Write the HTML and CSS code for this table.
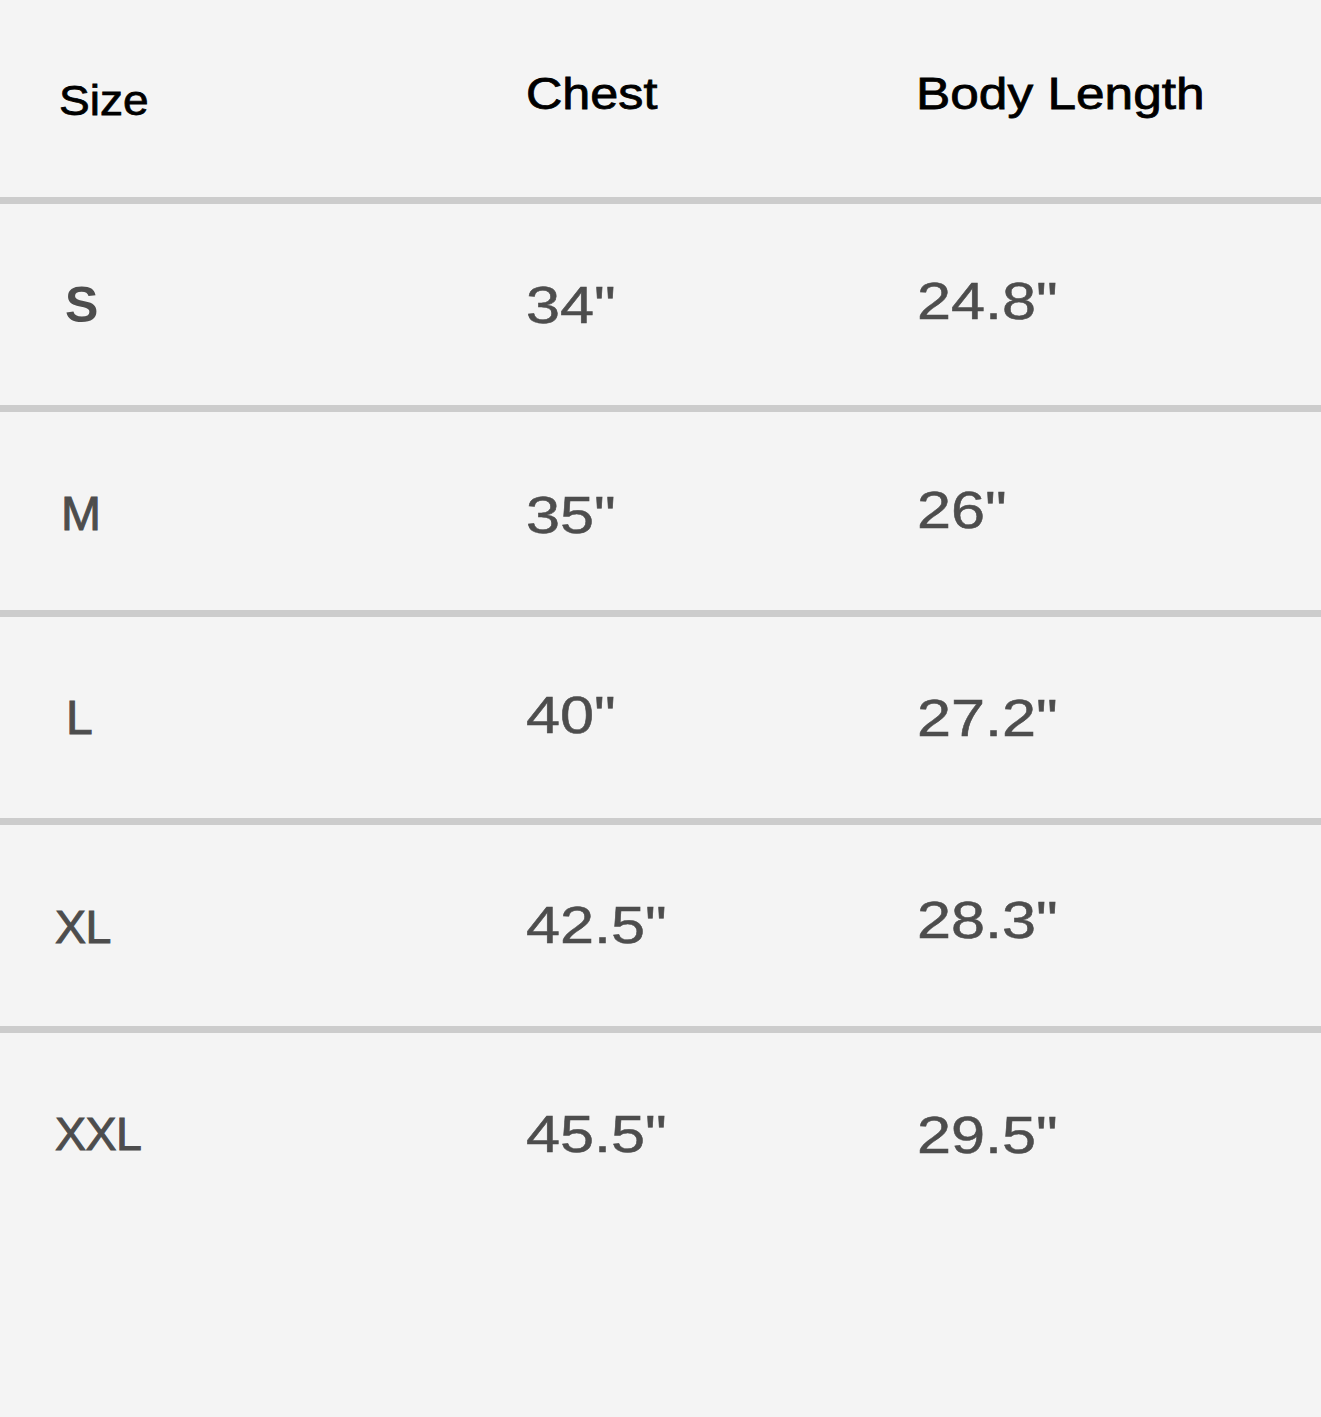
FILE: index.html
```html
<!DOCTYPE html>
<html lang="en">
<head>
<meta charset="utf-8">
<title>Size Chart</title>
<link rel="stylesheet" href="styles.css">
</head>
<body>
<div class="chart">
  <div class="row head">
    <div class="cell c1"><span class="t size">Size</span></div>
    <div class="cell c2"><span class="t hd">Chest</span></div>
    <div class="cell c3"><span class="t hd body-len">Body Length</span></div>
  </div>

  <div class="row data">
    <div class="cell c1"><span class="t lab bold shift-10 lift-1">S</span></div>
    <div class="cell c2"><span class="t val">34"</span></div>
    <div class="cell c3"><span class="t val lift-4">24.8"</span></div>
  </div>

  <div class="row data short">
    <div class="cell c1"><span class="t lab shift-6 drop-1">M</span></div>
    <div class="cell c2"><span class="t val drop-2">35"</span></div>
    <div class="cell c3"><span class="t val lift-3">26"</span></div>
  </div>

  <div class="row data">
    <div class="cell c1"><span class="t lab shift-11">L</span></div>
    <div class="cell c2"><span class="t val lift-3">40"</span></div>
    <div class="cell c3"><span class="t val">27.2"</span></div>
  </div>

  <div class="row data">
    <div class="cell c1"><span class="t lab tight drop-1">XL</span></div>
    <div class="cell c2"><span class="t val lift-1">42.5"</span></div>
    <div class="cell c3"><span class="t val lift-6">28.3"</span></div>
  </div>

  <div class="row data last">
    <div class="cell c1"><span class="t lab tight">XXL</span></div>
    <div class="cell c2"><span class="t val">45.5"</span></div>
    <div class="cell c3"><span class="t val drop-1">29.5"</span></div>
  </div>
</div>
</body>
</html>
```

FILE: styles.css
```css
html, body {
  margin: 0;
  padding: 0;
  background: #f4f4f4;
}

body {
  font-family: "Liberation Sans", Arial, Helvetica, sans-serif;
}

.chart {
  width: 1321px;
  min-height: 1417px;
  display: flex;
  flex-direction: column;
  background: #f4f4f4;
}

.row {
  display: grid;
  grid-template-columns: 526px 391px 1fr;
}

.head {
  height: 197px;
}

.data {
  border-top: 7px solid #cccccc;
  height: 201px;
}

.data.short {
  height: 198px;
}

.data.last {
  flex: 1;
  height: auto;
}

.cell {
  line-height: 1;
}

.c1 {
  padding-left: 55px;
}

.head .cell {
  padding-top: 72px;
}

.head .c1 {
  padding-top: 79px;
  padding-left: 59px;
}

.data .cell {
  padding-top: 76px;
}

.data .c1 {
  padding-top: 77px;
}

.t {
  display: block;
  width: max-content;
  line-height: 1;
  transform-origin: 0 0;
  white-space: nowrap;
}

.size {
  font-size: 43px;
  color: #000;
  transform: scaleX(1.07);
  -webkit-text-stroke: 0.8px #000;
}

.hd {
  font-size: 44.5px;
  color: #000;
  transform: scaleX(1.13);
  -webkit-text-stroke: 0.8px #000;
}

.body-len {
  transform: scaleX(1.155);
  margin-left: -1px;
}

.lab {
  font-size: 48px;
  color: #4d4d4d;
  -webkit-text-stroke: 1px #4d4d4d;
}

.lab.tight {
  font-size: 46.5px;
  letter-spacing: -0.5px;
  margin-top: 1px;
}

.lab.tight.drop-1 {
  margin-top: 2px;
}

.lab.bold {
  font-size: 50px;
  font-weight: 700;
  -webkit-text-stroke: 0;
}

.val {
  font-size: 51px;
  color: #4d4d4d;
  transform: scaleX(1.2);
  -webkit-text-stroke: 0.5px #4d4d4d;
}

.shift-6 { margin-left: 6px; }
.shift-10 { margin-left: 10px; }
.shift-11 { margin-left: 11px; }

.lift-1 { margin-top: -1px; }
.lift-3 { margin-top: -3px; }
.lift-4 { margin-top: -4px; }
.lift-6 { margin-top: -6px; }
.drop-1 { margin-top: 1px; }
.drop-2 { margin-top: 2px; }
```
